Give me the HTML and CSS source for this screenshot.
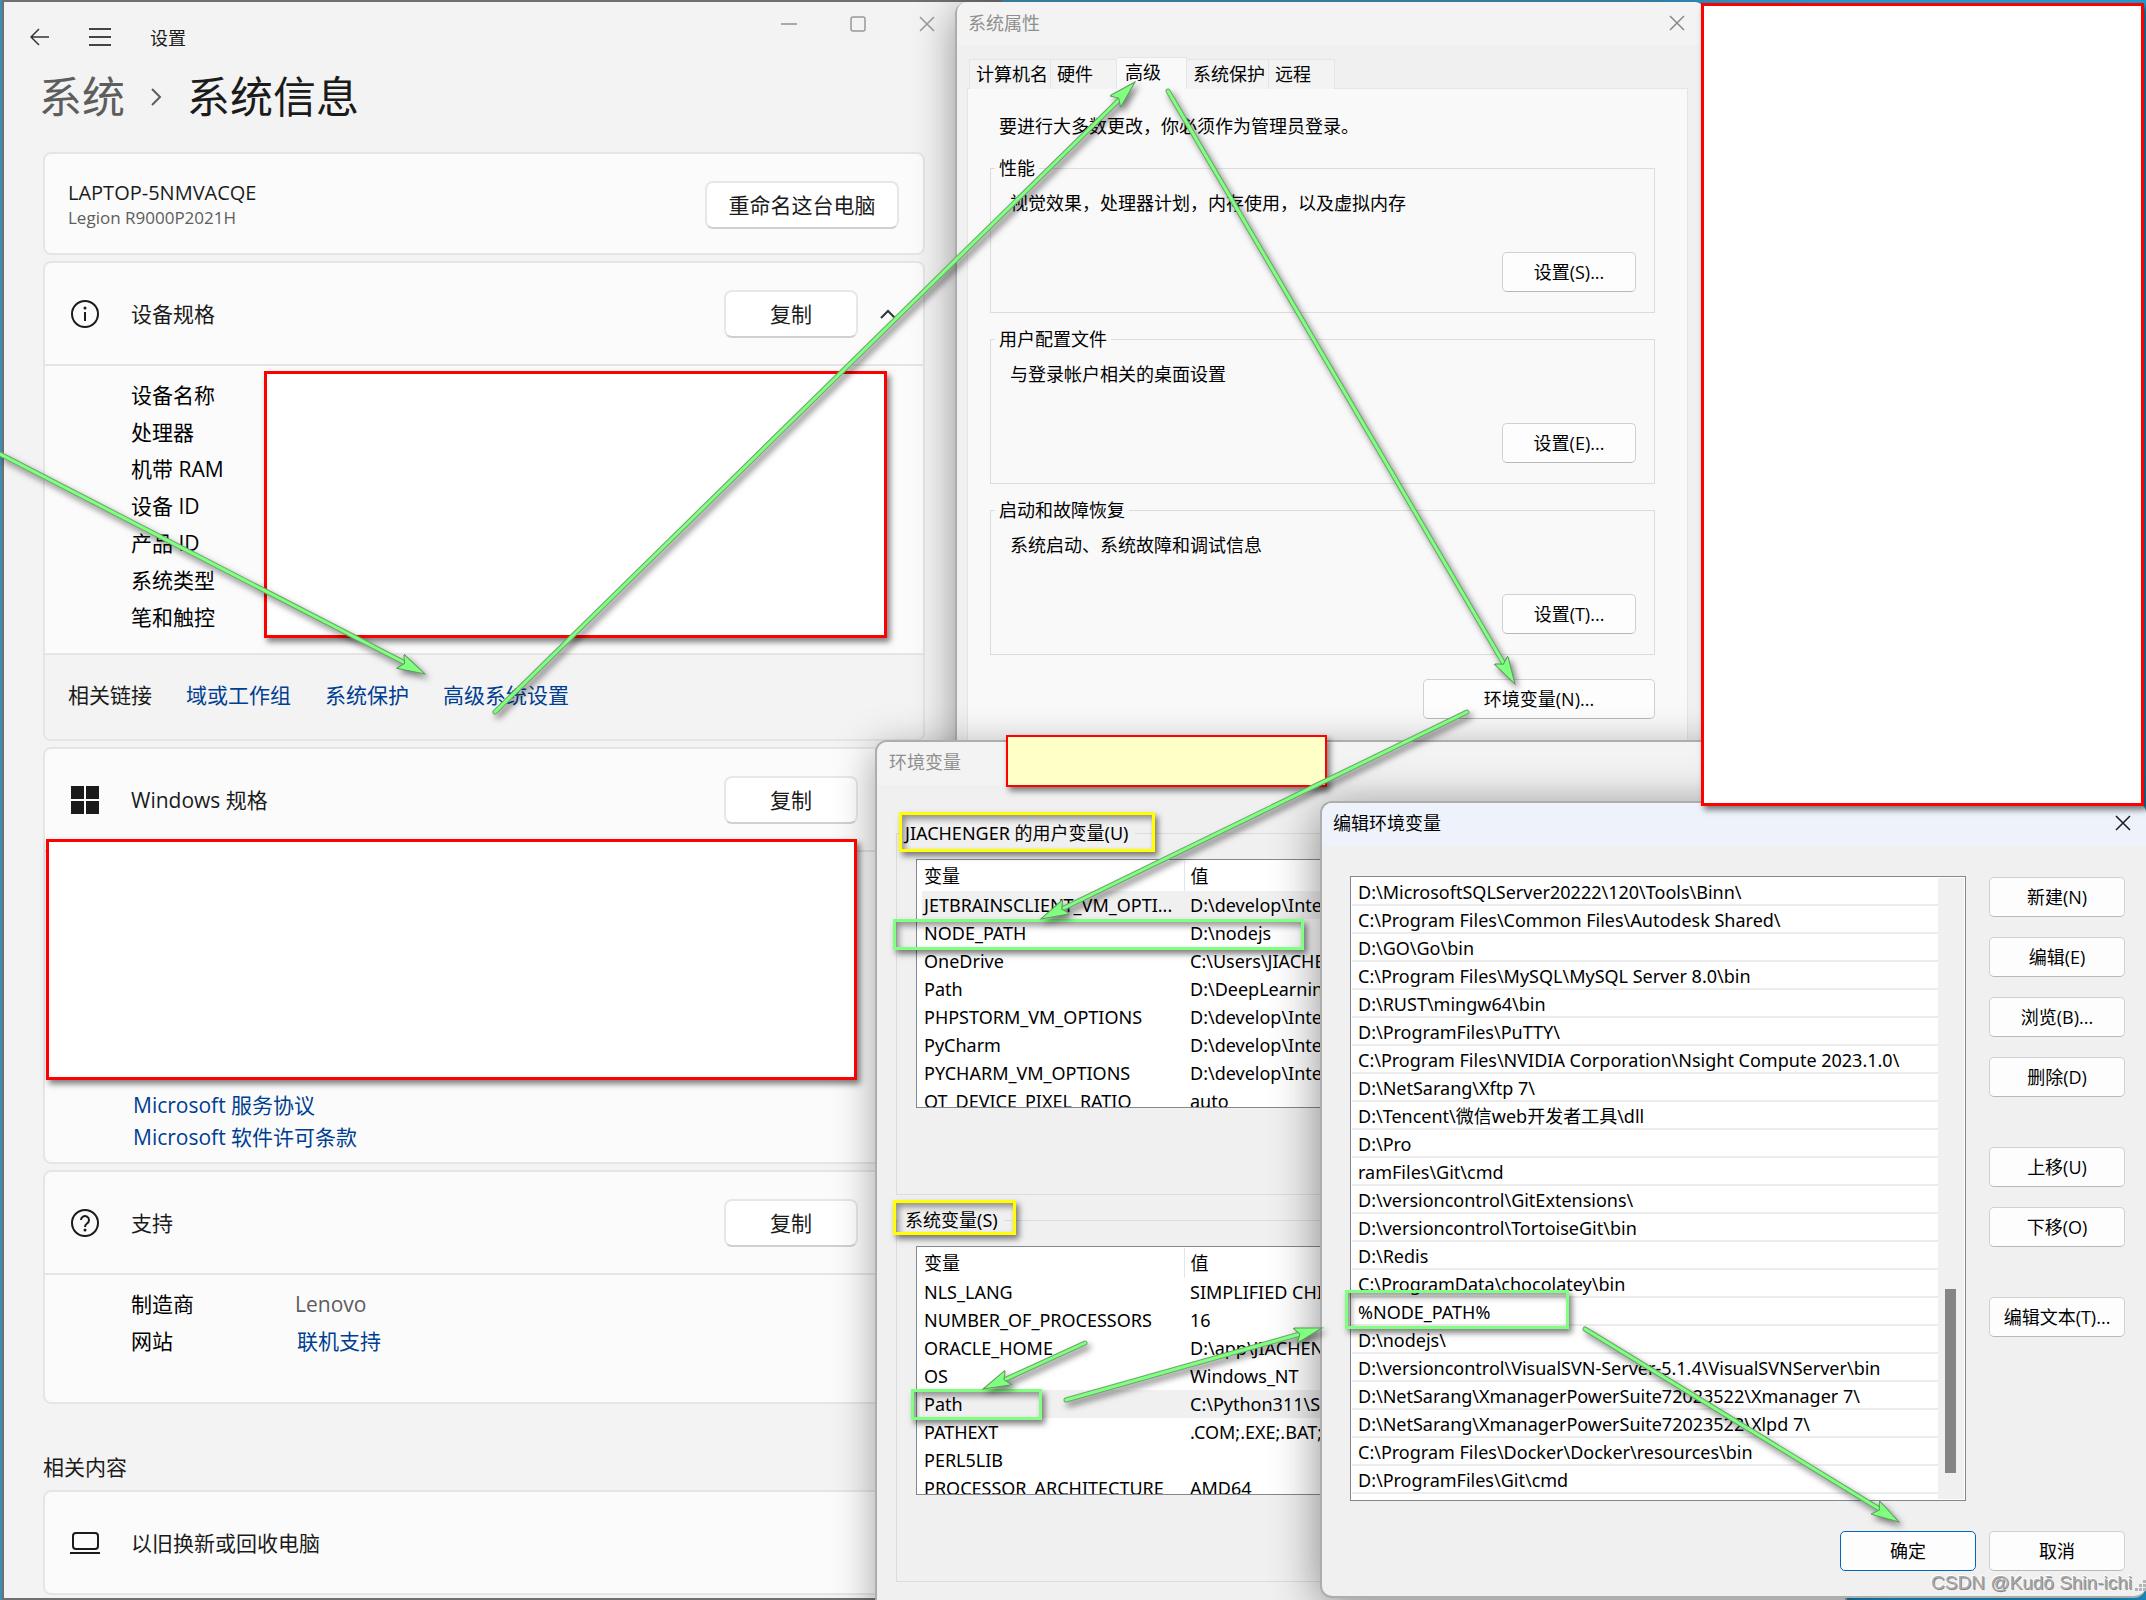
FILE: index.html
```html
<!DOCTYPE html>
<html lang="zh-CN">
<head>
<meta charset="utf-8">
<title>环境变量设置</title>
<link rel="stylesheet" href="styles.css">
</head>
<body>
<div class="desktop">

<main class="settings">
  <header class="settings-bar">
    <button class="icon-btn" aria-label="返回"><svg width="20" height="18" viewBox="0 0 20 18"><path d="M9 1 1 9l8 8M1 9h18" fill="none" stroke="#333" stroke-width="1.500"/></svg></button>
    <button class="icon-btn" aria-label="菜单"><svg width="22" height="18" viewBox="0 0 22 18"><path d="M0 1h22M0 9h22M0 17h22" fill="none" stroke="#444" stroke-width="2"/></svg></button>
    <span class="app-name">设置</span>
    <div class="caption">
      <button class="icon-btn" aria-label="最小化"><svg width="16" height="16" viewBox="0 0 16 16"><path d="M0 8h16" stroke="#aaa" stroke-width="2"/></svg></button>
      <button class="icon-btn" aria-label="最大化"><svg width="16" height="16" viewBox="0 0 16 16"><rect x="1" y="1" width="14" height="14" rx="2" fill="none" stroke="#999" stroke-width="1.500"/></svg></button>
      <button class="icon-btn" aria-label="关闭"><svg width="16" height="16" viewBox="0 0 16 16"><path d="m1 1 14 14M15 1 1 15" stroke="#999" stroke-width="1.500"/></svg></button>
    </div>
  </header>

  <h1 class="crumbs"><span class="crumb-parent">系统</span><svg width="12" height="18" viewBox="0 0 12 18"><path d="m2 1 8 8-8 8" fill="none" stroke="#5d5d5d" stroke-width="2"/></svg><span>系统信息</span></h1>

  <div class="cards">
    <section class="card device">
      <div>
        <div class="device-name">LAPTOP-5NMVACQE</div>
        <div class="device-model">Legion R9000P2021H</div>
      </div>
      <button class="btn rename">重命名这台电脑</button>
    </section>

    <section class="card">
      <div class="card-head">
        <svg class="card-icon" width="30" height="30" viewBox="0 0 30 30"><circle cx="15" cy="15" r="13" fill="none" stroke="#1b1b1b" stroke-width="2"/><path d="M15 13v9" stroke="#1b1b1b" stroke-width="2"/><circle cx="15" cy="9" r="1.5" fill="#1b1b1b"/></svg>
        <h2>设备规格</h2>
        <button class="btn copy">复制</button>
        <button class="icon-btn" aria-label="折叠"><svg width="16" height="10" viewBox="0 0 16 10"><path d="m1 9 7-7 7 7" fill="none" stroke="#333" stroke-width="2"/></svg></button>
      </div>
      <div class="card-body specs">
        <div>设备名称</div><div>处理器</div><div>机带 RAM</div><div>设备 ID</div><div>产品 ID</div><div>系统类型</div><div>笔和触控</div>
      </div>
      <nav class="card-links">
        <span>相关链接</span><a href="#">域或工作组</a><a href="#">系统保护</a><a href="#">高级系统设置</a>
      </nav>
    </section>

    <section class="card">
      <div class="card-head">
        <svg class="card-icon" width="30" height="30" viewBox="0 0 30 30"><path d="M1 1h13v13H1zM16 1h13v13H16zM1 16h13v13H1zM16 16h13v13H16z" fill="#1b1b1b"/></svg>
        <h2>Windows 规格</h2>
        <button class="btn copy">复制</button>
        <span class="head-end"></span>
      </div>
      <div class="card-body windows-spec">
        <a href="#">Microsoft 服务协议</a><a href="#">Microsoft 软件许可条款</a>
      </div>
    </section>

    <section class="card">
      <div class="card-head">
        <svg class="card-icon" width="30" height="30" viewBox="0 0 30 30"><circle cx="15" cy="15" r="13" fill="none" stroke="#1b1b1b" stroke-width="2"/><path d="M11 12a4 4 0 1 1 6 3.500c-1.500 1-2 1.500-2 3.500" fill="none" stroke="#1b1b1b" stroke-width="2"/><circle cx="15" cy="22" r="1.500" fill="#1b1b1b"/></svg>
        <h2>支持</h2>
        <button class="btn copy">复制</button>
        <span class="head-end"></span>
      </div>
      <dl class="card-body support">
        <dt>制造商</dt><dd>Lenovo</dd>
        <dt>网站</dt><dd><a href="#">联机支持</a></dd>
      </dl>
    </section>

    <h2 class="related">相关内容</h2>
    <section class="card">
      <div class="card-head">
        <svg class="card-icon" width="30" height="30" viewBox="0 0 30 30"><rect x="3" y="5" width="25" height="16" rx="3" fill="none" stroke="#1b1b1b" stroke-width="2"/><path d="M0 25h30" stroke="#1b1b1b" stroke-width="2"/></svg>
        <h2>以旧换新或回收电脑</h2>
      </div>
    </section>
  </div>
</main>

<section class="dialog props">
  <header class="titlebar"><span>系统属性</span><button class="icon-btn" aria-label="关闭"><svg width="16" height="16" viewBox="0 0 16 16"><path d="m1 1 14 14M15 1 1 15" stroke="#888" stroke-width="1.500"/></svg></button></header>
  <div class="tabs" role="tablist">
    <button role="tab" class="tab">计算机名</button><button role="tab" class="tab tab-short">硬件</button><button role="tab" class="tab tab-active" aria-selected="true">高级</button><button role="tab" class="tab">系统保护</button><button role="tab" class="tab tab-short">远程</button>
  </div>
  <div class="panel">
    <p class="panel-note">要进行大多数更改，你必须作为管理员登录。</p>
    <fieldset class="group"><legend>性能</legend><p>视觉效果，处理器计划，内存使用，以及虚拟内存</p><button class="dbtn">设置(S)...</button></fieldset>
    <fieldset class="group"><legend>用户配置文件</legend><p>与登录帐户相关的桌面设置</p><button class="dbtn">设置(E)...</button></fieldset>
    <fieldset class="group"><legend>启动和故障恢复</legend><p>系统启动、系统故障和调试信息</p><button class="dbtn">设置(T)...</button></fieldset>
    <button class="dbtn env-btn">环境变量(N)...</button>
  </div>
</section>

<section class="dialog env">
  <header class="titlebar"><span>环境变量</span></header>
  <fieldset class="vars">
    <legend>JIACHENGER 的用户变量(U)</legend>
    <div class="var-list">
      <table>
        <thead><tr><th>变量</th><th>值</th></tr></thead>
        <tbody>
          <tr class="picked"><td>JETBRAINSCLIENT_VM_OPTI...</td><td>D:\develop\IntelliJ</td></tr>
          <tr><td>NODE_PATH</td><td>D:\nodejs</td></tr>
          <tr><td>OneDrive</td><td>C:\Users\JIACHENGER</td></tr>
          <tr><td>Path</td><td>D:\DeepLearning</td></tr>
          <tr><td>PHPSTORM_VM_OPTIONS</td><td>D:\develop\IntelliJ</td></tr>
          <tr><td>PyCharm</td><td>D:\develop\IntelliJ</td></tr>
          <tr><td>PYCHARM_VM_OPTIONS</td><td>D:\develop\IntelliJ</td></tr>
          <tr><td>QT_DEVICE_PIXEL_RATIO</td><td>auto</td></tr>
        </tbody>
      </table>
    </div>
  </fieldset>
  <fieldset class="vars">
    <legend>系统变量(S)</legend>
    <div class="var-list">
      <table>
        <thead><tr><th>变量</th><th>值</th></tr></thead>
        <tbody>
          <tr><td>NLS_LANG</td><td>SIMPLIFIED CHINESE</td></tr>
          <tr><td>NUMBER_OF_PROCESSORS</td><td>16</td></tr>
          <tr><td>ORACLE_HOME</td><td>D:\app\JIACHENGER</td></tr>
          <tr><td>OS</td><td>Windows_NT</td></tr>
          <tr class="picked"><td>Path</td><td>C:\Python311\Scripts</td></tr>
          <tr><td>PATHEXT</td><td>.COM;.EXE;.BAT;.CMD</td></tr>
          <tr><td>PERL5LIB</td><td></td></tr>
          <tr><td>PROCESSOR_ARCHITECTURE</td><td>AMD64</td></tr>
        </tbody>
      </table>
    </div>
  </fieldset>
</section>

<section class="dialog edit">
  <header class="titlebar titlebar-active"><span>编辑环境变量</span><button class="icon-btn" aria-label="关闭"><svg width="16" height="16" viewBox="0 0 16 16"><path d="m1 1 14 14M15 1 1 15" stroke="#1b1b1b" stroke-width="1.500"/></svg></button></header>
  <div class="edit-body">
    <div class="path-list">
      <ul>
        <li>D:\MicrosoftSQLServer20222\120\Tools\Binn\</li>
        <li>C:\Program Files\Common Files\Autodesk Shared\</li>
        <li>D:\GO\Go\bin</li>
        <li>C:\Program Files\MySQL\MySQL Server 8.0\bin</li>
        <li>D:\RUST\mingw64\bin</li>
        <li>D:\ProgramFiles\PuTTY\</li>
        <li>C:\Program Files\NVIDIA Corporation\Nsight Compute 2023.1.0\</li>
        <li>D:\NetSarang\Xftp 7\</li>
        <li>D:\Tencent\微信web开发者工具\dll</li>
        <li>D:\Pro</li>
        <li>ramFiles\Git\cmd</li>
        <li>D:\versioncontrol\GitExtensions\</li>
        <li>D:\versioncontrol\TortoiseGit\bin</li>
        <li>D:\Redis</li>
        <li>C:\ProgramData\chocolatey\bin</li>
        <li>%NODE_PATH%</li>
        <li>D:\nodejs\</li>
        <li>D:\versioncontrol\VisualSVN-Server-5.1.4\VisualSVNServer\bin</li>
        <li>D:\NetSarang\XmanagerPowerSuite72023522\Xmanager 7\</li>
        <li>D:\NetSarang\XmanagerPowerSuite72023522\Xlpd 7\</li>
        <li>C:\Program Files\Docker\Docker\resources\bin</li>
        <li>D:\ProgramFiles\Git\cmd</li>
      </ul>
      <div class="scroll"><div class="thumb"></div></div>
    </div>
    <div class="edit-actions">
      <div class="action-set"><button class="dbtn">新建(N)</button><button class="dbtn">编辑(E)</button><button class="dbtn">浏览(B)...</button><button class="dbtn">删除(D)</button></div>
      <div class="action-set"><button class="dbtn">上移(U)</button><button class="dbtn">下移(O)</button></div>
      <div class="action-set"><button class="dbtn">编辑文本(T)...</button></div>
    </div>
  </div>
  <footer class="edit-foot"><button class="dbtn dbtn-default">确定</button><button class="dbtn">取消</button></footer>
  <svg class="grip" width="12" height="12" viewBox="0 0 12 12"><path d="M9 0h3v3H9zM9 4h3v3H9zM5 4h3v3H5zM9 8h3v3H9zM5 8h3v3H5zM1 8h3v3H1z" fill="#b4b4b4"/></svg>
</section>

<div class="mark cover m-specs"></div>
<div class="mark cover m-windows"></div>
<div class="mark cover m-right"></div>
<div class="mark note"></div>
<div class="mark yellow m-user"></div>
<div class="mark yellow m-system"></div>
<div class="mark green m-node"></div>
<div class="mark green m-path"></div>
<div class="mark green m-entry"></div>

<svg class="arrows" width="2146" height="1600" viewBox="0 0 2146 1600">
  <defs>
    <marker id="head" markerUnits="userSpaceOnUse" markerWidth="30" markerHeight="20" refX="28" refY="8" orient="auto"><path d="M28 8 0 0l5 8-5 8z" fill="#80ff80" stroke="#5a9a5a" stroke-width="1"/></marker>
  </defs>
  <g class="arrow-edge"><path d="M0 454 405 663M495 712 1121 98M1168 91 1504 664M1467 712 1062 909M1085 1343 1004 1380M1066 1400 1300 1334M1585 1329 1881 1510"/></g>
  <g class="arrow-core"><path d="M0 454 405 663M495 712 1121 98M1168 91 1504 664M1467 712 1062 909M1085 1343 1004 1380M1066 1400 1300 1334M1585 1329 1881 1510"/></g>
  <g class="arrow-tips"><path d="M0 454 425 674"/><path d="M495 712 1135 82"/><path d="M1168 91 1515 684"/><path d="M1467 712 1041 919"/><path d="M1085 1343 983 1389"/><path d="M1066 1400 1322 1328"/><path d="M1585 1329 1899 1522"/></g>
</svg>
<div class="watermark">CSDN @Kudō Shin-ichi</div>
</div>
</body>
</html>
```
FILE: styles.css
```css
* { box-sizing: border-box; }
body { margin: 0; font-family: "Open Sans", "Noto Sans CJK SC", sans-serif; font-size: 18px; line-height: 24px; color: #000; }
h1, h2, p, ul, dl, dd, dt { margin: 0; padding: 0; font-weight: 400; }
button { font: inherit; color: inherit; padding: 0; }
a { color: #003e92; text-decoration: none; }
svg { display: block; flex: none; }
.icon-btn { border: 0; background: none; }
.desktop { position: relative; min-height: 100vh; overflow: hidden; background: linear-gradient(90deg, #3e8db3 0, #3e8db3 75%, #1c9cd4 85%); }

/* settings window */
.settings { position: absolute; left: 2px; top: 0; width: 1000px; height: 1600px; border: 2px solid #6f6f6f; border-width: 2px 0 2px 2px; background: #f3f3f3; font-size: 21px; line-height: 28px; color: #1b1b1b; }
.settings-bar { display: flex; align-items: flex-start; gap: 39px; height: 68px; padding: 26px 0 0 26px; }
.app-name { font-size: 18px; line-height: 20px; }
.caption { display: flex; gap: 53px; margin: -12px 67px 0 auto; }
.crumbs { display: flex; align-items: center; gap: 25px; height: 54px; padding-left: 35px; font-size: 43px; line-height: 54px; }
.crumb-parent { color: #5d5d5d; }
.cards { display: flex; flex-direction: column; gap: 6px; width: 882px; margin: 28px 0 0 39px; }
.card { border: 2px solid #e5e5e5; border-radius: 8px; background: #fbfbfb; overflow: hidden; }
.device { display: flex; align-items: center; justify-content: space-between; height: 103px; padding: 2px 24px 0 23px; }
.device-name { font-size: 20px; line-height: 26px; }
.device-model { font-size: 17px; line-height: 24px; color: #5d5d5d; }
.btn { height: 48px; border: 2px solid #e7e7e7; border-bottom-color: #d0d0d0; border-radius: 8px; background: #fff; }
.rename { width: 194px; }
.copy { width: 134px; }
.card-head { display: flex; align-items: center; height: 101px; padding-left: 25px; }
.card-head h2 { flex: 1; margin-left: 31px; font-size: 21px; line-height: 28px; }
.card-head .icon-btn { width: 16px; margin: 0 27px 0 22px; }
.head-end { width: 65px; }
.card-body { border-top: 2px solid #e5e5e5; padding-left: 86px; }
.card-body a { padding-left: 2px; }
.specs { height: 289px; padding-top: 11px; line-height: 37px; color: #000; }
.card-links { display: flex; gap: 34px; height: 86px; padding: 26px 0 0 23px; border-top: 2px solid #e5e5e5; background: #f3f3f3; }
.windows-spec { display: flex; flex-direction: column; justify-content: flex-end; height: 312px; padding-bottom: 9px; line-height: 32px; }
.support { display: grid; grid-template-columns: 164px 1fr; align-content: start; height: 129px; padding-top: 11px; line-height: 37px; color: #000; }
.support dd { color: #5d5d5d; }
.related { margin: 43px 0 3px; font-size: 21px; line-height: 28px; }

/* dialogs */
.dialog { position: absolute; border: 2px solid #adadad; border-radius: 12px; background: #f0f0f0; }
.titlebar { display: flex; align-items: center; justify-content: space-between; height: 43px; padding: 0 15px 4px 11px; border-radius: 10px 10px 0 0; background: #f3f3f3; color: #8f8f8f; }
.titlebar-active { background: #eef3fb; color: #000; }
.dbtn { width: 134px; height: 40px; border: 1px solid #d0d0d0; border-bottom-color: #b8b8b8; border-radius: 5px; background: #fdfdfd; color: #000; }
.dbtn-default { border-color: #0067c0; }

.props { left: 955px; top: 2px; width: 750px; height: 900px; border-width: 0 0 0 2px; box-shadow: 0 8px 40px #00000066; }
.props .titlebar { padding-right: 20px; padding-bottom: 2px; }
.tabs { display: flex; align-items: flex-end; height: 44px; padding-left: 12px; }
.tab { width: 82px; height: 30px; padding: 0 0 2px 6px; border: 1px solid #e5e5e5; border-bottom: 0; background: #f3f3f3; text-align: left; }
.tab + .tab { border-left: 0; }
.tab-short { width: 66px; }
.tab-active { width: 70px; height: 32px; padding: 0 0 4px 8px; background: #f9f9f9; }
.panel { height: 740px; margin: -1px 17px 0 10px; padding: 25px 32px 0 22px; border: 1px solid #e5e5e5; background: #f9f9f9; }
.panel-note { margin: 0 0 18px 9px; }
.group { display: block; height: 157px; margin: 0 0 14px; padding: 11px 0 0 19px; border: 1px solid #dcdcdc; min-width: 0; }
.group legend { margin-left: -15px; padding: 0 4px; }
.group .dbtn { display: block; margin: 37px 18px 0 auto; }
.env-btn { display: block; width: 232px; margin: 24px 0 0 auto; }

.env { left: 875px; top: 740px; width: 972px; height: 880px; box-shadow: 0 8px 40px #00000059; }
.env .titlebar { padding-left: 12px; }
.vars { height: 374px; margin: 0 19px; padding: 14px 19px 0; border: 1px solid #dcdcdc; min-width: 0; font-family: "Noto Sans", "Noto Sans CJK SC", sans-serif; }
.titlebar + .vars { margin-top: 36px; margin-bottom: 13px; }
.vars legend { margin-left: -17px; padding: 0 6px; }
.var-list { height: 249px; padding: 1px 0 0 5px; border: 1px solid #828790; background: #fff; overflow: hidden; }
.var-list table { width: 100%; border-collapse: collapse; table-layout: fixed; line-height: 28px; }
.var-list th { height: 30px; padding: 0 0 0 2px; font-weight: 400; text-align: left; border-right: 1px solid #e5e5e5; }
.var-list th:first-child { width: 262px; }
.var-list td { height: 28px; padding: 0 0 0 2px; white-space: nowrap; }
.var-list th + th, .var-list td + td { padding-left: 6px; }
.picked { background: #f0f0f0; }

.edit { left: 1320px; right: 0; top: 801px; height: 797px; border-width: 2px 0 2px 2px; box-shadow: 0 8px 48px #00000073; }
.edit-body { display: flex; gap: 23px; padding: 30px 21px 0 28px; }
.path-list { flex: 1; display: flex; height: 625px; padding: 1px; border: 1px solid #828790; background: #fff; font-family: "Noto Sans", "Noto Sans CJK SC", sans-serif; }
.path-list ul { flex: 1; list-style: none; }
.path-list li { height: 28px; padding-left: 6px; border-bottom: 2px solid #ececec; line-height: 28px; white-space: nowrap; }
.scroll { width: 26px; padding: 411px 8px 0 7px; background: #f0f0f0; }
.thumb { height: 184px; background: #858585; }
.edit-actions { display: flex; flex-direction: column; gap: 50px; padding-top: 1px; }
.action-set { display: flex; flex-direction: column; gap: 20px; }
.edit .dbtn { width: 136px; }
.edit-foot { display: flex; justify-content: flex-end; gap: 13px; padding: 30px 21px 0 0; }
.grip { position: absolute; right: 0; bottom: 4px; }

/* annotations */
.mark { position: absolute; box-shadow: 3px 4px 6px #00000080; }
.cover { border: 3px solid #f00; background: #fff; }
.note { left: 1006px; top: 735px; width: 321px; height: 52px; border: 2px solid #f00; background: #ffffc8; }
.yellow, .green { border: 3px solid #ff0; box-shadow: 3px 4px 6px #00000080, inset 3px 4px 6px #00000066; }
.green { border-color: #80ff80; }
.m-specs { left: 264px; top: 371px; width: 623px; height: 267px; }
.m-windows { left: 46px; top: 839px; width: 811px; height: 241px; }
.m-right { left: 1701px; top: 3px; width: 443px; height: 803px; }
.m-user { left: 899px; top: 812px; width: 256px; height: 40px; }
.m-system { left: 893px; top: 1200px; width: 123px; height: 35px; }
.m-node { left: 893px; top: 919px; width: 411px; height: 31px; }
.m-path { left: 911px; top: 1389px; width: 131px; height: 31px; }
.m-entry { left: 1345px; top: 1290px; width: 224px; height: 39px; }
.arrows { position: absolute; left: 0; top: 0; fill: none; pointer-events: none; filter: drop-shadow(3px 4px 3px #00000080); }
.arrow-edge { stroke: #6aa66a; stroke-width: 5; stroke-linecap: round; }
.arrow-core { stroke: #80ff80; stroke-width: 3; stroke-linecap: round; }
.arrow-tips path { marker-end: url(#head); }
.watermark { position: absolute; right: 14px; bottom: 5px; font-family: "Liberation Sans", sans-serif; font-size: 19px; color: #a8a8a8; text-shadow: 1px 1px 0 #888, -1px -1px 0 #fff; }
```
